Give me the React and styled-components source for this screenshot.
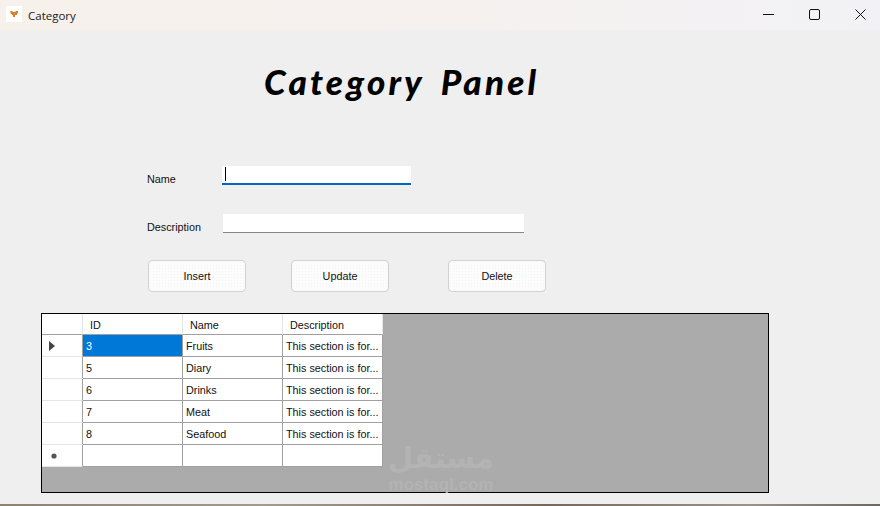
import React from 'react';
import styled, { createGlobalStyle } from 'styled-components';

const GlobalStyle = createGlobalStyle`
  html, body {
    margin: 0;
    padding: 0;
    background: #efefef;
  }
  * {
    box-sizing: border-box;
  }
`;

const Window = styled.div`
  position: relative;
  width: 880px;
  height: 506px;
  overflow: hidden;
  display: flex;
  flex-direction: column;
  background: #efefef;
  font-family: "Liberation Sans", Arial, sans-serif;
  font-size: 10.8px;
  color: #111;
`;

const TitleBar = styled.div`
  height: 30px;
  flex: none;
  display: flex;
  align-items: center;
  padding: 0 0 2px 6px;
  background: linear-gradient(90deg, #f7f1ec 0%, #f6f1ee 45%, #f2f2f6 100%);
`;

const AppIcon = styled.div`
  width: 16px;
  height: 16px;
  background: #fff;
  display: flex;
  align-items: center;
  justify-content: center;
`;

const WindowTitle = styled.span`
  margin: 2px 0 0 6px;
  font-family: "Open Sans", sans-serif;
  font-size: 11.5px;
  color: #1a1a1a;
`;

const WindowButtons = styled.div`
  margin: 0 -3px 0 auto;
  display: flex;
`;

const WindowButton = styled.div`
  width: 46px;
  height: 28px;
  display: flex;
  align-items: center;
  justify-content: center;
`;

const Heading = styled.h1`
  margin: 28px 0 2px 264px;
  height: 46px;
  font-family: Lato, sans-serif;
  font-style: italic;
  font-weight: 900;
  font-size: 35px;
  line-height: 46px;
  letter-spacing: 3.2px;
  word-spacing: 6px;
  color: #000;
  white-space: nowrap;
`;

const Form = styled.div`
  margin: 60px 0 0 147px;
  display: flex;
  flex-direction: column;
`;

const Field = styled.div`
  display: flex;
  align-items: flex-end;
  height: 19px;
  margin-bottom: 29px;
`;

const Label = styled.label`
  width: ${p => p.$width}px;
  flex: none;
  line-height: 13px;
  margin-bottom: -1px;
`;

const TextBox = styled.div`
  width: ${p => p.$width}px;
  height: 19px;
  background: #fff;
  border-bottom: ${p => (p.$focused ? '2px solid #0067c0' : '1px solid #868686')};
  padding: 1px 0 0 3px;
`;

const Caret = styled.div`
  width: 1px;
  height: 14px;
  background: #000;
`;

const ButtonRow = styled.div`
  display: flex;
  margin: -2px 0 0 1px;
`;

const Button = styled.button`
  width: 98px;
  height: 32px;
  margin-right: ${p => p.$gap}px;
  padding: 0;
  background-color: #fcfcfc;
  background-image: radial-gradient(#f3f3f3 0.7px, transparent 0.8px);
  background-size: 3px 3px;
  border: 1px solid #d0d0d0;
  border-radius: 4px;
  font-family: inherit;
  font-size: 10.8px;
  color: #111;
`;

const GridView = styled.div`
  margin: 21px 0 0 41px;
  width: 728px;
  height: 180px;
  flex: none;
  background: #ababab;
  border: 1px solid #000;
  position: relative;
`;

const Table = styled.div`
  display: grid;
  grid-template-columns: 41px 100px 100px 100px;
  grid-template-rows: 21px;
  grid-auto-rows: 22px;
  width: 341px;
`;

const HeaderCorner = styled.div`
  background: #fff;
  border-right: 1px solid #e4e4e4;
  border-bottom: 1px solid #a0a0a0;
`;

const HeaderCell = styled.div`
  background: #fff;
  border-right: 1px solid #e4e4e4;
  border-bottom: 1px solid #a0a0a0;
  padding-left: 7px;
  line-height: 22px;
`;

const RowHeader = styled.div`
  background: #fff;
  border-right: 1px solid #a0a0a0;
  border-bottom: 1px solid #e4e4e4;
  display: flex;
  align-items: center;
  justify-content: ${p => (p.$star ? 'center' : 'flex-start')};
  padding-left: ${p => (p.$star ? '0' : '7px')};
  padding-right: ${p => (p.$star ? '16px' : '0')};
`;

const Cell = styled.div`
  background: ${p => (p.$selected ? '#0078d7' : '#fff')};
  color: ${p => (p.$selected ? '#fff' : '#111')};
  border-right: 1px solid #a0a0a0;
  border-bottom: 1px solid #a0a0a0;
  padding-left: 3px;
  line-height: 23px;
  white-space: nowrap;
  overflow: hidden;
`;

const Watermark = styled.div`
  position: absolute;
  left: 344px;
  top: 127px;
  width: 110px;
  text-align: center;
  color: #b3b3b3;
  pointer-events: none;
`;

const WatermarkArabic = styled.div`
  font-family: "DejaVu Sans", sans-serif;
  font-weight: 700;
  font-size: 29px;
  line-height: 34px;
`;

const WatermarkLatin = styled.div`
  font-family: "Liberation Sans", sans-serif;
  font-weight: 700;
  font-size: 17px;
  line-height: 20px;
`;

const BottomStrip = styled.div`
  position: absolute;
  left: 0;
  right: 0;
  bottom: 0;
  height: 2px;
  background: linear-gradient(90deg, #8d8172, #a39a8d 30%, #77685a 62%, #9b9288 85%, #6d675f);
`;

const rows = [
  { id: 3, name: 'Fruits', selected: true },
  { id: 5, name: 'Diary' },
  { id: 6, name: 'Drinks' },
  { id: 7, name: 'Meat' },
  { id: 8, name: 'Seafood' },
];

function App() {
  return (
    <Window>
      <GlobalStyle />
      <TitleBar>
        <AppIcon>
          <svg width="8" height="8" viewBox="0 0 8 8">
            <path d="M0 1h2l1 1h2l1-1h2v2l-1 1v1H5v2H3V5H2V4H1z" fill="#d9822b" />
          </svg>
        </AppIcon>
        <WindowTitle>Category</WindowTitle>
        <WindowButtons>
          <WindowButton>
            <svg width="11" height="11" viewBox="0 0 11 11">
              <path d="M0 5.5h11" stroke="#111" strokeWidth="1" />
            </svg>
          </WindowButton>
          <WindowButton>
            <svg width="11" height="11" viewBox="0 0 11 11">
              <rect x="0.5" y="0.5" width="10" height="10" rx="1.5" fill="none" stroke="#111" />
            </svg>
          </WindowButton>
          <WindowButton>
            <svg width="11" height="11" viewBox="0 0 11 11">
              <path d="M0.5 0.5l10 10M10.5 0.5l-10 10" stroke="#111" strokeWidth="1" />
            </svg>
          </WindowButton>
        </WindowButtons>
      </TitleBar>

      <Heading>Category Panel</Heading>

      <Form>
        <Field>
          <Label $width={75}>Name</Label>
          <TextBox $width={189} $focused>
            <Caret />
          </TextBox>
        </Field>
        <Field>
          <Label $width={76}>Description</Label>
          <TextBox $width={301} />
        </Field>
        <ButtonRow>
          <Button $gap={45}>Insert</Button>
          <Button $gap={59}>Update</Button>
          <Button>Delete</Button>
        </ButtonRow>
      </Form>

      <GridView>
        <Table>
          <HeaderCorner />
          <HeaderCell>ID</HeaderCell>
          <HeaderCell>Name</HeaderCell>
          <HeaderCell>Description</HeaderCell>
          {rows.map(row => (
            <React.Fragment key={row.id}>
              <RowHeader>
                {row.selected && (
                  <svg width="6" height="10" viewBox="0 0 6 10">
                    <path d="M0 0l6 5-6 5z" fill="#444" />
                  </svg>
                )}
              </RowHeader>
              <Cell $selected={row.selected}>{row.id}</Cell>
              <Cell>{row.name}</Cell>
              <Cell>This section is for...</Cell>
            </React.Fragment>
          ))}
          <RowHeader $star>
            <svg width="6" height="6" viewBox="0 0 6 6">
              <circle cx="3" cy="3" r="2.6" fill="#555" />
            </svg>
          </RowHeader>
          <Cell />
          <Cell />
          <Cell />
        </Table>
        <Watermark>
          <WatermarkArabic>مستقل</WatermarkArabic>
          <WatermarkLatin>mostaql.com</WatermarkLatin>
        </Watermark>
      </GridView>
      <BottomStrip />
    </Window>
  );
}

export default App;
